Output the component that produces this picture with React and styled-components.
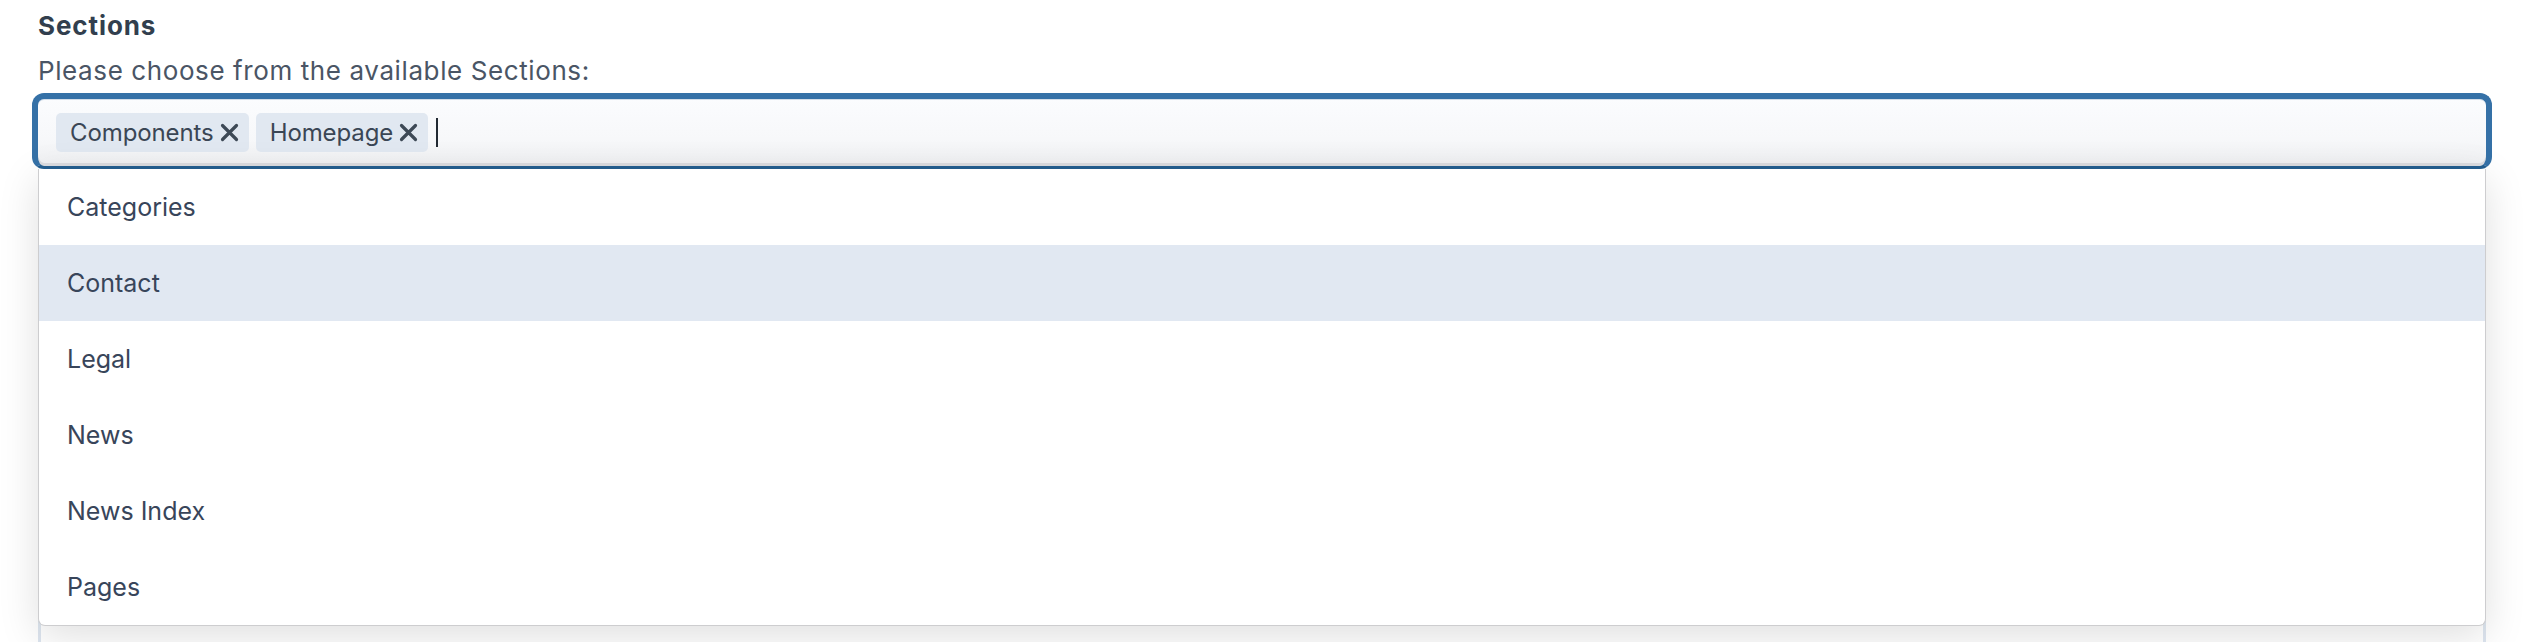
import React from "react"
import styled, { createGlobalStyle } from "styled-components"

const GlobalStyle = createGlobalStyle`
  html, body {
    margin: 0;
    padding: 0;
    background: #ffffff;
    overflow: hidden;
  }
  body {
    font-family: Inter, "Noto Sans", "Liberation Sans", sans-serif;
    -webkit-font-smoothing: antialiased;
  }
`

const Page = styled.div`
  padding: 10px 38px 0 38px;
`

const Label = styled.div`
  font-size: 26px;
  line-height: 32px;
  font-weight: 700;
  color: #323f4e;
  letter-spacing: 0.9px;
`

const Help = styled.div`
  margin-top: 13px;
  font-size: 26px;
  line-height: 32px;
  color: #4a5565;
  letter-spacing: 0.6px;
`

const Field = styled.div`
  position: relative;
  margin-top: 6px;
`

const Input = styled.div`
  display: flex;
  align-items: center;
  gap: 7px;
  margin: 0 -6px;
  padding: 14px 18px;
  border: 6px solid #3571a7;
  border-bottom: 3px solid #245f91;
  border-radius: 12px;
  background: linear-gradient(#fbfcfe, #f7f8fa 60%, #eff0f2);
  box-shadow: inset 0 -3px 0 #dcdde1, inset 0 1px 0 #d3dde8;
`

const Tag = styled.span`
  display: inline-flex;
  align-items: center;
  gap: 6px;
  height: 39px;
  padding: 0 10px 0 14px;
  border-radius: 5px;
  background: #e1e8f1;
  color: #3a4655;
  font-size: 24px;
  letter-spacing: -0.1px;
`

const Caret = styled.span`
  width: 2px;
  height: 29px;
  margin-left: 1px;
  background: #222a33;
`

const Menu = styled.ul`
  position: absolute;
  z-index: 10;
  top: 100%;
  left: 0;
  right: 0;
  margin: 0;
  padding: 0;
  list-style: none;
  background: #ffffff;
  border: 1px solid #cdcdcf;
  border-top: none;
  border-radius: 0 0 7px 7px;
  box-shadow: 0 10px 40px rgba(0, 0, 0, 0.13);
  overflow: hidden;
`

const Option = styled.li`
  height: 76px;
  display: flex;
  align-items: center;
  padding-left: 28px;
  font-size: 25px;
  color: #38455a;
  background: ${(p) => (p.active ? "#e1e8f2" : "transparent")};
`

const NextBox = styled.div`
  margin-top: 40px;
  height: 520px;
  border: 3px solid #dde5ef;
  border-radius: 8px;
  background: #ffffff;
`

const RemoveIcon = () => (
  <svg width="19" height="19" viewBox="0 0 19 19" aria-hidden="true">
    <path
      d="M2.5 2.5 L16.5 16.5 M16.5 2.5 L2.5 16.5"
      stroke="#3d4956"
      strokeWidth="3.2"
      strokeLinecap="round"
      fill="none"
    />
  </svg>
)

const selected = ["Components", "Homepage"]
const options = ["Categories", "Contact", "Legal", "News", "News Index", "Pages"]

const App = () => (
  <>
    <GlobalStyle />
    <Page>
      <Label>Sections</Label>
      <Help>Please choose from the available Sections:</Help>
      <Field>
        <Input>
          {selected.map((s) => (
            <Tag key={s}>
              {s}
              <RemoveIcon />
            </Tag>
          ))}
          <Caret />
        </Input>
        <Menu>
          {options.map((o) => (
            <Option key={o} active={o === "Contact"}>
              {o}
            </Option>
          ))}
        </Menu>
      </Field>
      <NextBox />
    </Page>
  </>
)

export default App
